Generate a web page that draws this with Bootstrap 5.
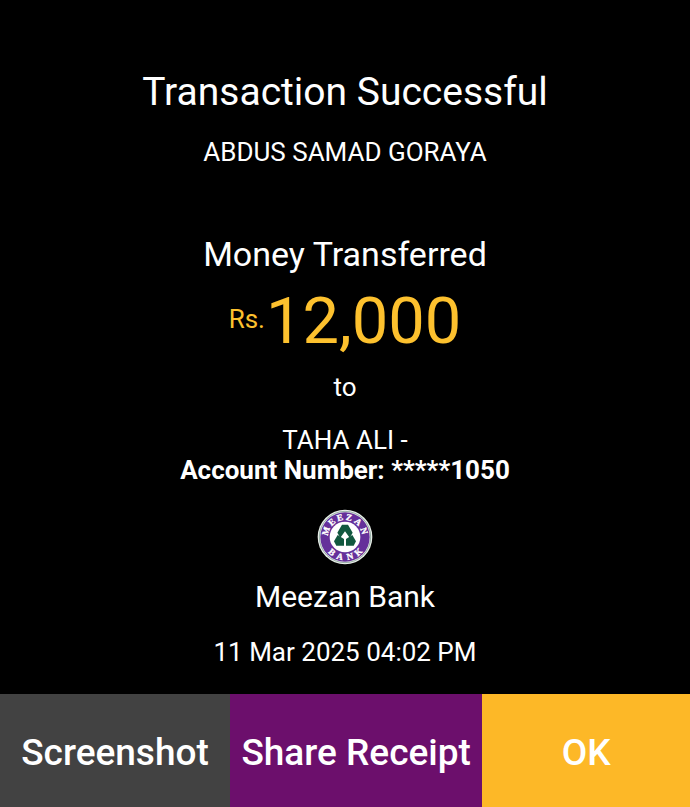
<!DOCTYPE html>
<html lang="en">
<head>
<meta charset="utf-8">
<meta name="viewport" content="width=device-width, initial-scale=1">
<title>Transaction Successful</title>
<link href="https://cdn.jsdelivr.net/npm/bootstrap@5.3.0/dist/css/bootstrap.min.css" rel="stylesheet">
<style>
body { background: #000; color: #fff; font-family: Roboto, sans-serif; font-size: 26px; line-height: 30px; }
.receipt { padding: 68px 16px 24px; }
.title { font-size: 39px; line-height: 48px; margin-bottom: 21px; font-weight: 400; }
.sender { margin-bottom: 67px; }
.subtitle { font-size: 34px; line-height: 40px; margin-bottom: 9px; font-weight: 400; }
.amount { color: #fdc12e; margin-bottom: 13px; gap: 1px; }
.currency { padding-bottom: 4px; }
.figure-value { font-size: 65px; line-height: 76px; }
.recipient { margin-top: 23px; }
.bank-logo { width: 56px; height: 56px; margin: 24px 0 14px; }
.bank-name { font-size: 30px; line-height: 36px; margin-bottom: 22px; }
.action { flex: 1 1 0; padding: 34px 4px 30px; font-size: 37px; line-height: 49px; font-weight: 500; white-space: nowrap; }
.action, .action:hover { color: #fff; }
.action-shot, .action-shot:hover { flex-grow: 230; background: #424242; }
.action-share, .action-share:hover { flex-grow: 253; background: #6c0f6c; }
.action-ok, .action-ok:hover { flex-grow: 207; background: #fdb827; }
</style>
<script src="https://cdn.jsdelivr.net/npm/bootstrap@5.3.0/dist/js/bootstrap.bundle.min.js" defer></script>
</head>
<body class="min-vh-100 d-flex flex-column">
<main class="receipt flex-grow-1 d-flex flex-column align-items-center text-center">
  <h1 class="title">Transaction Successful</h1>
  <p class="sender">ABDUS SAMAD GORAYA</p>
  <h2 class="subtitle">Money Transferred</h2>
  <p class="amount d-flex align-items-center"><span class="currency">Rs.</span><span class="figure-value">12,000</span></p>
  <p class="mb-0">to</p>
  <p class="recipient mb-0">TAHA ALI -</p>
  <p class="fw-bold mb-0">Account Number: *****1050</p>
  <svg class="bank-logo" viewBox="-84 -84 168 168" role="img" aria-label="Meezan Bank logo">
    <circle r="82" fill="#e9efe9"/>
    <circle r="77" fill="none" stroke="#6f8f86" stroke-width="2"/>
    <circle r="74" fill="#65309a"/>
    <circle r="46" fill="#fff"/>
    <g fill="#fff" stroke="#fff" stroke-width="1" font-family="Liberation Serif, serif" font-weight="700" font-size="27" text-anchor="middle">
      <text y="-51" transform="rotate(-73)">M</text>
      <text y="-51" transform="rotate(-42)">E</text>
      <text y="-51" transform="rotate(-15)">E</text>
      <text y="-51" transform="rotate(12)">Z</text>
      <text y="-51" transform="rotate(41)">A</text>
      <text y="-51" transform="rotate(72)">N</text>
      <text y="69" transform="rotate(41)">B</text>
      <text y="69" transform="rotate(15)">A</text>
      <text y="69" transform="rotate(-14)">N</text>
      <text y="69" transform="rotate(-42)">K</text>
    </g>
    <g fill="#11583f">
      <path d="M-9-37H9L23-13 14 2 0-17-14 2-23-13Z"/>
      <path d="M-22-6-3 6V26H-26L-33 13Z"/>
      <path d="M22-6 3 6V26H26L33 13Z"/>
    </g>
  </svg>
  <p class="bank-name">Meezan Bank</p>
  <p class="mb-0">11 Mar 2025 04:02 PM</p>
</main>
<footer class="d-flex">
  <button type="button" class="action action-shot btn border-0 rounded-0">Screenshot</button>
  <button type="button" class="action action-share btn border-0 rounded-0">Share Receipt</button>
  <button type="button" class="action action-ok btn border-0 rounded-0">OK</button>
</footer>
</body>
</html>
